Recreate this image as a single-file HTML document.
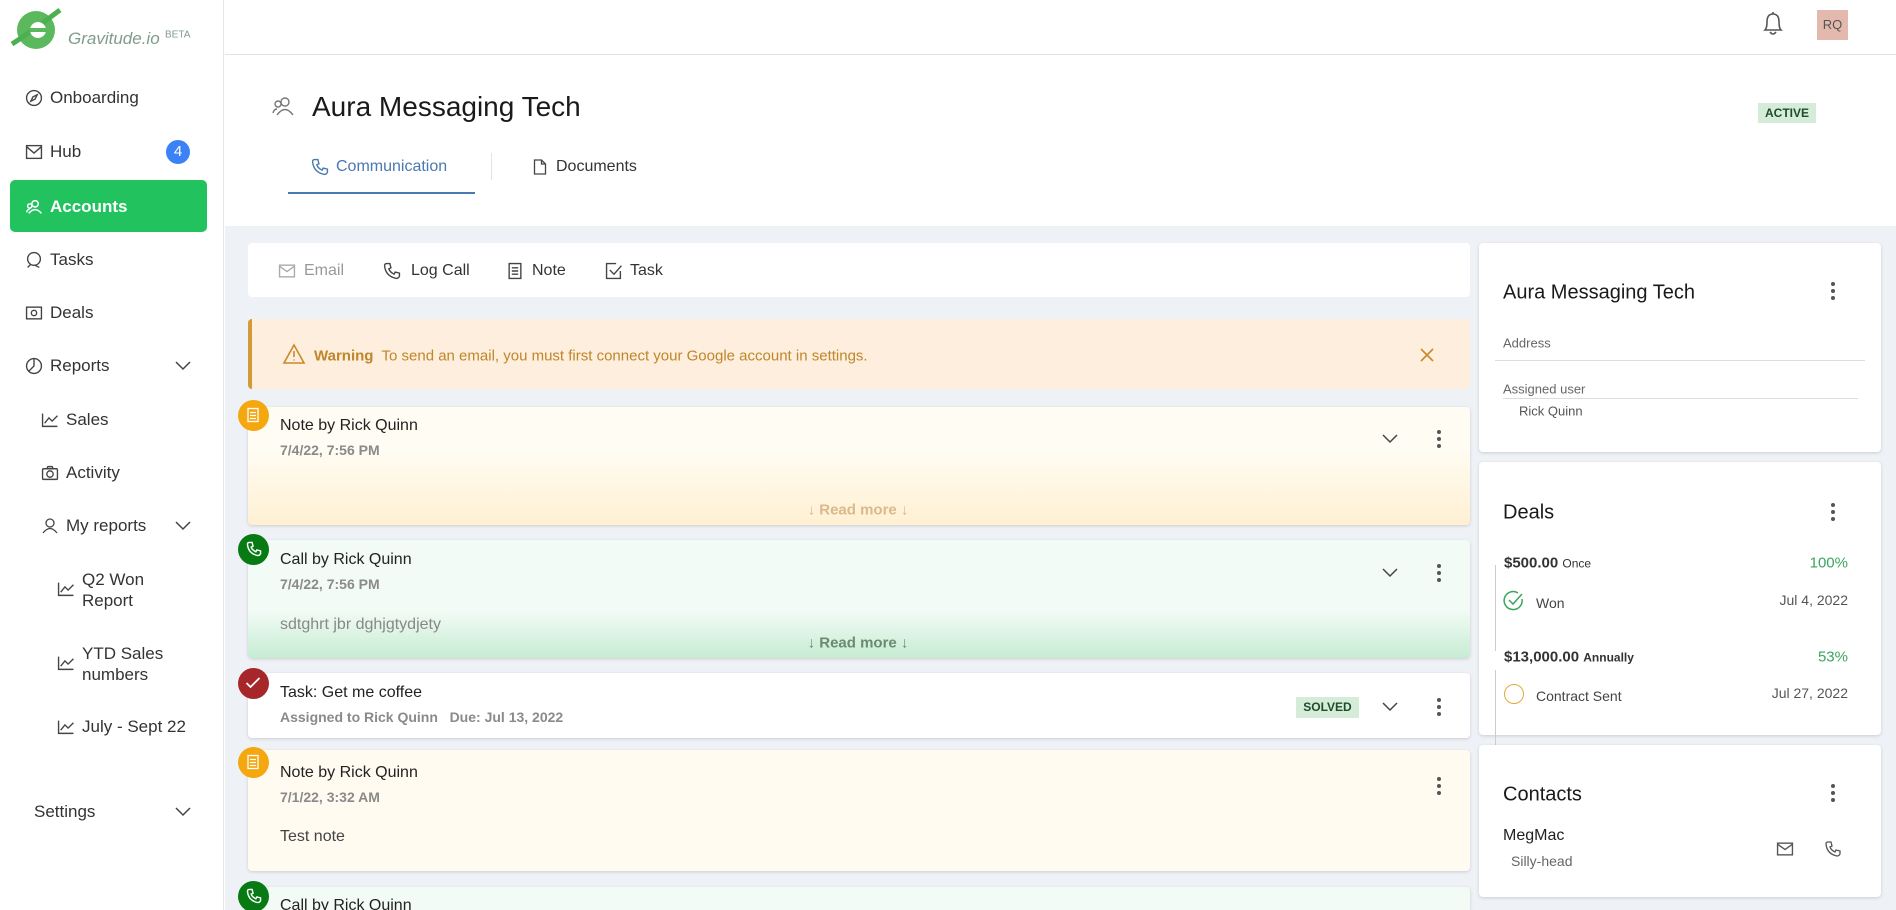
<!DOCTYPE html>
<html style="overflow:hidden;height:910px"><head><meta charset="utf-8"><style>
*{box-sizing:border-box;margin:0;padding:0}
body{width:1896px;height:910px;overflow:hidden;background:#fff;font-family:"Liberation Sans",sans-serif;color:#222;position:relative}
.a{position:absolute;white-space:nowrap}
.m{transform:translateY(-50%)}
svg{display:block}
.ic{position:absolute;transform:translate(-50%,-50%)}
.side{font-size:17px;color:#333}
.card{position:absolute;border-radius:4px;box-shadow:0 1px 3px rgba(0,0,0,.15)}
.t{font-size:16px;color:#222}
.d{font-size:14px;color:#8a8a8a;font-weight:bold}
.dots{position:absolute;width:4px;transform:translate(-50%,-50%)}
.dots i{display:block;width:4px;height:4px;border-radius:2px;background:#555;margin:3px 0}
</style></head><body>
<!-- sidebar -->
<div class="a" style="left:0;top:0;width:224px;height:910px;border-right:1px solid #e6e6e6;background:#fff"></div>
<svg class="a" style="left:8px;top:4px" width="58" height="50" viewBox="0 0 58 50"><ellipse cx="28" cy="26" rx="19" ry="19" fill="#5cb85c"/><path d="M4 40 Q20 30 52 6" stroke="#4caf50" stroke-width="5" fill="none"/><circle cx="30" cy="26" r="8" fill="#fff"/><path d="M22 26 h16" stroke="#5cb85c" stroke-width="4"/></svg>
<div class="a m" style="left:68px;top:39px;font-size:17px;font-style:italic;color:#7f9c8c">Gravitude.io</div>
<div class="a m" style="left:165px;top:35px;font-size:10px;color:#7f9c8c">BETA</div>

<div class="a" style="left:10px;top:180px;width:197px;height:52px;background:#22c35e;border-radius:5px"></div>
<svg class="ic" style="left:34px;top:98px" width="17" height="17" viewBox="0 0 16 16" fill="none" stroke="#444" stroke-width="1.3"><circle cx="8" cy="8" r="7"/><path d="M11 5 L9 9 L5 11 L7 7 Z"/></svg>
<div class="a m side" style="left:50px;top:98px">Onboarding</div>
<svg class="ic" style="left:34px;top:152px" width="17" height="15" viewBox="0 0 16 14" fill="none" stroke="#444" stroke-width="1.3"><rect x="1" y="1" width="14" height="12"/><path d="M1 2 L8 8 L15 2"/></svg>
<div class="a m side" style="left:50px;top:152px">Hub</div>
<div class="a" style="left:166px;top:140px;width:24px;height:24px;border-radius:12px;background:#3b82f6;color:#fff;font-size:15px;text-align:center;line-height:24px">4</div>
<svg class="ic" style="left:34px;top:207px" width="17" height="15" viewBox="0 0 16 14" fill="none" stroke="#fff" stroke-width="1.4"><circle cx="9" cy="4" r="3"/><path d="M3 13 Q9 6 15 13"/><circle cx="4" cy="6" r="2"/><path d="M1 12 Q2 9 4 9"/></svg>
<div class="a m side" style="left:50px;top:207px;color:#fff;font-weight:bold">Accounts</div>
<svg class="ic" style="left:34px;top:260px" width="17" height="17" viewBox="0 0 16 16" fill="none" stroke="#444" stroke-width="1.3"><circle cx="8" cy="7" r="6"/><path d="M2 15 L5 12 M9 13 L13 15"/></svg>
<div class="a m side" style="left:50px;top:260px">Tasks</div>
<svg class="ic" style="left:34px;top:313px" width="17" height="14" viewBox="0 0 16 13" fill="none" stroke="#444" stroke-width="1.3"><rect x="1" y="1" width="14" height="11"/><circle cx="8" cy="6.5" r="2.5"/></svg>
<div class="a m side" style="left:50px;top:313px">Deals</div>
<svg class="ic" style="left:34px;top:366px" width="17" height="17" viewBox="0 0 16 16" fill="none" stroke="#444" stroke-width="1.3"><circle cx="8" cy="8" r="7"/><path d="M8 1 V8 L3 13"/></svg>
<div class="a m side" style="left:50px;top:366px">Reports</div>
<svg class="ic" style="left:183px;top:366px" width="16" height="10" viewBox="0 0 16 10" fill="none" stroke="#444" stroke-width="1.5"><path d="M1 1 L8 8 L15 1"/></svg>
<svg class="ic" style="left:50px;top:420px" width="17" height="15" viewBox="0 0 16 14" fill="none" stroke="#444" stroke-width="1.3"><path d="M1 1 V13 H15 M3 10 L7 5 L10 8 L15 3"/></svg>
<div class="a m side" style="left:66px;top:420px">Sales</div>
<svg class="ic" style="left:50px;top:473px" width="17" height="15" viewBox="0 0 16 14" fill="none" stroke="#444" stroke-width="1.3"><rect x="1" y="3" width="14" height="10" rx="1"/><circle cx="8" cy="8" r="3"/><path d="M5 3 L6 1 H10 L11 3"/></svg>
<div class="a m side" style="left:66px;top:473px">Activity</div>
<svg class="ic" style="left:50px;top:526px" width="16" height="16" viewBox="0 0 16 16" fill="none" stroke="#444" stroke-width="1.3"><circle cx="8" cy="5" r="4"/><path d="M1 15 Q8 6 15 15"/></svg>
<div class="a m side" style="left:66px;top:526px">My reports</div>
<svg class="ic" style="left:183px;top:526px" width="16" height="10" viewBox="0 0 16 10" fill="none" stroke="#444" stroke-width="1.5"><path d="M1 1 L8 8 L15 1"/></svg>
<svg class="ic" style="left:66px;top:589px" width="17" height="15" viewBox="0 0 16 14" fill="none" stroke="#444" stroke-width="1.3"><path d="M1 1 V13 H15 M3 10 L7 5 L10 8 L15 3"/></svg>
<div class="a side" style="left:82px;top:569px;line-height:21px">Q2 Won<br>Report</div>
<svg class="ic" style="left:66px;top:663px" width="17" height="15" viewBox="0 0 16 14" fill="none" stroke="#444" stroke-width="1.3"><path d="M1 1 V13 H15 M3 10 L7 5 L10 8 L15 3"/></svg>
<div class="a side" style="left:82px;top:643px;line-height:21px">YTD Sales<br>numbers</div>
<svg class="ic" style="left:66px;top:727px" width="17" height="15" viewBox="0 0 16 14" fill="none" stroke="#444" stroke-width="1.3"><path d="M1 1 V13 H15 M3 10 L7 5 L10 8 L15 3"/></svg>
<div class="a m side" style="left:82px;top:727px">July - Sept 22</div>
<div class="a m side" style="left:34px;top:812px">Settings</div>
<svg class="ic" style="left:183px;top:812px" width="16" height="10" viewBox="0 0 16 10" fill="none" stroke="#444" stroke-width="1.5"><path d="M1 1 L8 8 L15 1"/></svg>

<!-- topbar -->
<div class="a" style="left:225px;top:54px;width:1671px;height:1px;background:#e3e3e3"></div>
<svg class="ic" style="left:1773px;top:24px" width="24" height="26" viewBox="0 0 24 26" fill="none" stroke="#555" stroke-width="1.6"><path d="M4 19 Q6 17 6 11 Q6 3 12 3 Q18 3 18 11 Q18 17 20 19 Z M9 21 Q12 25 15 21"/><path d="M12 1 V3"/></svg>
<div class="a" style="left:1817px;top:10px;width:31px;height:30px;background:#e3b9ad;color:#555;font-size:13px;text-align:center;line-height:30px">RQ</div>

<!-- header -->
<svg class="ic" style="left:284px;top:106px" width="24" height="20" viewBox="0 0 24 20" fill="none" stroke="#777" stroke-width="1.4"><circle cx="13" cy="6" r="4"/><path d="M5 19 Q13 8 21 19"/><circle cx="6" cy="8" r="3"/><path d="M1 17 Q2 13 5 13"/></svg>
<div class="a m" style="left:312px;top:107px;font-size:28px;color:#1a1a1a">Aura Messaging Tech</div>
<div class="a" style="left:1758px;top:103px;width:58px;height:20px;background:#d4ecd8;color:#1f4d2a;font-size:12px;font-weight:bold;text-align:center;line-height:20px">ACTIVE</div>
<svg class="ic" style="left:320px;top:167px" width="17" height="17" viewBox="0 0 16 16" fill="none" stroke="#4a78b0" stroke-width="1.3"><path d="M3 1 L6 1 L7 5 L5 6 Q6 9 10 11 L11 9 L15 10 L15 13 Q14 15 12 15 Q2 13 1 3 Q1 1 3 1Z"/></svg>
<div class="a m" style="left:336px;top:167px;font-size:16px;color:#4a78b0">Communication</div>
<div class="a" style="left:288px;top:192px;width:187px;height:2px;background:#4a78b0"></div>
<div class="a" style="left:491px;top:153px;width:1px;height:27px;background:#e3e3e3"></div>
<svg class="ic" style="left:540px;top:167px" width="13" height="16" viewBox="0 0 13 16" fill="none" stroke="#444" stroke-width="1.3"><path d="M1 1 H8 L12 5 V15 H1 Z M8 1 V5 H12"/></svg>
<div class="a m" style="left:556px;top:167px;font-size:16px;color:#333">Documents</div>

<!-- grey area -->
<div class="a" style="left:225px;top:226px;width:1671px;height:684px;background:#eef1f5"></div>
<div class="card" style="left:248px;top:243px;width:1222px;height:54px;background:#fff;box-shadow:none"></div>
<svg class="ic" style="left:287px;top:271px" width="17" height="14" viewBox="0 0 16 13" fill="none" stroke="#aaa" stroke-width="1.3"><rect x="1" y="1" width="14" height="11"/><path d="M1 2 L8 7 L15 2"/></svg>
<div class="a m" style="left:304px;top:271px;font-size:16px;color:#999">Email</div>
<svg class="ic" style="left:392px;top:271px" width="17" height="17" viewBox="0 0 16 16" fill="none" stroke="#444" stroke-width="1.3"><path d="M3 1 L6 1 L7 5 L5 6 Q6 9 10 11 L11 9 L15 10 L15 13 Q14 15 12 15 Q2 13 1 3 Q1 1 3 1Z"/></svg>
<div class="a m" style="left:411px;top:271px;font-size:16px;color:#333">Log Call</div>
<svg class="ic" style="left:515px;top:271px" width="14" height="17" viewBox="0 0 13 16" fill="none" stroke="#444" stroke-width="1.3"><rect x="1" y="1" width="11" height="14"/><path d="M3.5 5 H9.5 M3.5 8 H9.5 M3.5 11 H9.5"/></svg>
<div class="a m" style="left:532px;top:271px;font-size:16px;color:#333">Note</div>
<svg class="ic" style="left:614px;top:271px" width="17" height="17" viewBox="0 0 16 16" fill="none" stroke="#444" stroke-width="1.3"><path d="M14 8 V15 H1 V1 H10"/><path d="M4 7 L8 11 L15 3"/></svg>
<div class="a m" style="left:630px;top:271px;font-size:16px;color:#333">Task</div>

<!-- warning -->
<div class="card" style="left:248px;top:319px;width:1222px;height:70px;background:#fdeedd;border-left:4px solid #d39a3a;box-shadow:none"></div>
<svg class="ic" style="left:294px;top:354px" width="24" height="22" viewBox="0 0 24 22" fill="none" stroke="#c98a2a" stroke-width="1.6"><path d="M12 2 L22 20 H2 Z M12 8 V14 M12 16.5 V17.5"/></svg>
<div class="a m" style="left:314px;top:356px;font-size:15px;color:#c0862a"><b>Warning</b>&nbsp; To send an email, you must first connect your Google account in settings.</div>
<svg class="ic" style="left:1427px;top:355px" width="14" height="14" viewBox="0 0 14 14" stroke="#c98a2a" stroke-width="1.6"><path d="M1 1 L13 13 M13 1 L1 13"/></svg>

<!-- note 1 -->
<div class="card" style="left:248px;top:407px;width:1222px;height:118px;background:linear-gradient(#fffcf3 0%,#fffcf3 35%,#fff0d2 100%)"></div>
<div class="a m t" style="left:280px;top:426px">Note by Rick Quinn</div>
<div class="a m d" style="left:280px;top:450px">7/4/22, 7:56 PM</div>
<div class="a m" style="left:858px;top:510px;transform:translate(-50%,-50%);font-size:15px;color:#dcb88a;font-weight:bold">↓ Read more ↓</div>
<!-- call 1 -->
<div class="card" style="left:248px;top:540px;width:1222px;height:118px;background:linear-gradient(#f2fbf5 0%,#f2fbf5 60%,#c6ecd2 100%)"></div>
<div class="a m t" style="left:280px;top:560px">Call by Rick Quinn</div>
<div class="a m d" style="left:280px;top:584px">7/4/22, 7:56 PM</div>
<div class="a m" style="left:280px;top:625px;font-size:16px;color:#888">sdtghrt jbr dghjgtydjety</div>
<div class="a m" style="left:858px;top:643px;transform:translate(-50%,-50%);font-size:15px;color:#6a8a74;font-weight:bold">↓ Read more ↓</div>
<!-- task -->
<div class="card" style="left:248px;top:673px;width:1222px;height:65px;background:#fff"></div>
<div class="a m t" style="left:280px;top:693px">Task: Get me coffee</div>
<div class="a m d" style="left:280px;top:717px">Assigned to Rick Quinn &nbsp; Due: Jul 13, 2022</div>
<div class="a" style="left:1296px;top:697px;width:63px;height:21px;background:#d4ecd8;color:#1f4d2a;font-size:12px;font-weight:bold;text-align:center;line-height:21px">SOLVED</div>
<!-- note 2 -->
<div class="card" style="left:248px;top:750px;width:1222px;height:121px;background:#fffbf1"></div>
<div class="a m t" style="left:280px;top:773px">Note by Rick Quinn</div>
<div class="a m d" style="left:280px;top:797px">7/1/22, 3:32 AM</div>
<div class="a m" style="left:280px;top:837px;font-size:16px;color:#444">Test note</div>
<!-- call 2 -->
<div class="card" style="left:248px;top:887px;width:1222px;height:23px;background:#f2fbf5;border-radius:4px 4px 0 0"></div>
<div class="a m t" style="left:280px;top:906px">Call by Rick Quinn</div>

<!-- chevrons & dots -->
<svg class="ic" style="left:1390px;top:439px" width="16" height="10" viewBox="0 0 16 10" fill="none" stroke="#444" stroke-width="1.5"><path d="M1 1 L8 8 L15 1"/></svg>
<svg class="ic" style="left:1390px;top:573px" width="16" height="10" viewBox="0 0 16 10" fill="none" stroke="#444" stroke-width="1.5"><path d="M1 1 L8 8 L15 1"/></svg>
<svg class="ic" style="left:1390px;top:707px" width="16" height="10" viewBox="0 0 16 10" fill="none" stroke="#444" stroke-width="1.5"><path d="M1 1 L8 8 L15 1"/></svg>
<div class="dots" style="left:1439px;top:439px"><i></i><i></i><i></i></div>
<div class="dots" style="left:1439px;top:573px"><i></i><i></i><i></i></div>
<div class="dots" style="left:1439px;top:707px"><i></i><i></i><i></i></div>
<div class="dots" style="left:1439px;top:786px"><i></i><i></i><i></i></div>

<!-- timeline circles -->
<div class="a" style="left:238px;top:400px;width:31px;height:31px;border-radius:50%;background:#f5a70f"></div>
<svg class="ic" style="left:253px;top:415px" width="12" height="15" viewBox="0 0 12 15" fill="none" stroke="#fff" stroke-width="1.3"><rect x="1" y="1" width="10" height="13"/><path d="M3 5 H9 M3 8 H9 M3 11 H9"/></svg>
<div class="a" style="left:238px;top:534px;width:31px;height:31px;border-radius:50%;background:#087a14"></div>
<svg class="ic" style="left:254px;top:549px" width="15" height="15" viewBox="0 0 16 16" fill="none" stroke="#fff" stroke-width="1.5"><path d="M3 1 L6 1 L7 5 L5 6 Q6 9 10 11 L11 9 L15 10 L15 13 Q14 15 12 15 Q2 13 1 3 Q1 1 3 1Z"/></svg>
<div class="a" style="left:238px;top:668px;width:31px;height:31px;border-radius:50%;background:#a6262a"></div>
<svg class="ic" style="left:253px;top:683px" width="15" height="12" viewBox="0 0 15 12" fill="none" stroke="#fff" stroke-width="1.8"><path d="M1 6 L5 10 L14 1"/></svg>
<div class="a" style="left:238px;top:747px;width:31px;height:31px;border-radius:50%;background:#f5a70f"></div>
<svg class="ic" style="left:253px;top:762px" width="12" height="15" viewBox="0 0 12 15" fill="none" stroke="#fff" stroke-width="1.3"><rect x="1" y="1" width="10" height="13"/><path d="M3 5 H9 M3 8 H9 M3 11 H9"/></svg>
<div class="a" style="left:238px;top:881px;width:31px;height:31px;border-radius:50%;background:#087a14"></div>
<svg class="ic" style="left:254px;top:896px" width="15" height="15" viewBox="0 0 16 16" fill="none" stroke="#fff" stroke-width="1.5"><path d="M3 1 L6 1 L7 5 L5 6 Q6 9 10 11 L11 9 L15 10 L15 13 Q14 15 12 15 Q2 13 1 3 Q1 1 3 1Z"/></svg>

<!-- right panel -->
<div class="card" style="left:1479px;top:243px;width:402px;height:209px;background:#fff"></div>
<div class="a m" style="left:1503px;top:293px;font-size:20px;color:#1a1a1a">Aura Messaging Tech</div>
<div class="dots" style="left:1833px;top:291px"><i></i><i></i><i></i></div>
<div class="a m" style="left:1503px;top:343px;font-size:13px;color:#666">Address</div>
<div class="a" style="left:1495px;top:360px;width:370px;height:1px;background:#ddd"></div>
<div class="a m" style="left:1503px;top:389px;font-size:13px;color:#666">Assigned user</div>
<div class="a" style="left:1503px;top:398px;width:355px;height:1px;background:#ddd"></div>
<div class="a m" style="left:1519px;top:411px;font-size:13px;color:#555">Rick Quinn</div>

<div class="card" style="left:1479px;top:462px;width:402px;height:273px;background:#fff"></div>
<div class="a m" style="left:1503px;top:513px;font-size:20px;color:#1a1a1a">Deals</div>
<div class="dots" style="left:1833px;top:512px"><i></i><i></i><i></i></div>
<div class="a" style="left:1495px;top:565px;width:1px;height:86px;background:#ccc"></div>
<div class="a m" style="left:1504px;top:563px;font-size:15px;color:#333"><b>$500.00</b> <span style="font-size:12px">Once</span></div>
<div class="a m" style="right:48px;top:563px;font-size:15px;color:#3aa55c">100%</div>
<svg class="ic" style="left:1514px;top:601px" width="22" height="22" viewBox="0 0 22 22" fill="none" stroke="#3aa55c" stroke-width="1.5"><path d="M19 9 A9 9 0 1 1 15 3"/><path d="M6 10 L10 14 L19 4"/></svg>
<div class="a m" style="left:1536px;top:603px;font-size:14px;color:#444">Won</div>
<div class="a m" style="right:48px;top:600px;font-size:14px;color:#555">Jul 4, 2022</div>
<div class="a" style="left:1495px;top:670px;width:1px;height:87px;background:#ccc"></div>
<div class="a m" style="left:1504px;top:657px;font-size:15px;color:#333"><b>$13,000.00</b> <span style="font-size:12px;font-weight:bold">Annually</span></div>
<div class="a m" style="right:48px;top:657px;font-size:15px;color:#3aa55c">53%</div>
<div class="a" style="left:1504px;top:684px;width:20px;height:20px;border-radius:50%;border:1.5px solid #e0aa3a"></div>
<div class="a m" style="left:1536px;top:696px;font-size:14px;color:#444">Contract Sent</div>
<div class="a m" style="right:48px;top:693px;font-size:14px;color:#555">Jul 27, 2022</div>

<div class="card" style="left:1479px;top:745px;width:402px;height:152px;background:#fff"></div>
<div class="a m" style="left:1503px;top:795px;font-size:20px;color:#1a1a1a">Contacts</div>
<div class="dots" style="left:1833px;top:793px"><i></i><i></i><i></i></div>
<div class="a m" style="left:1503px;top:836px;font-size:16px;color:#222">MegMac</div>
<div class="a m" style="left:1511px;top:861px;font-size:14px;color:#666">Silly-head</div>
<svg class="ic" style="left:1785px;top:849px" width="17" height="14" viewBox="0 0 16 13" fill="none" stroke="#555" stroke-width="1.3"><rect x="1" y="1" width="14" height="11"/><path d="M1 2 L8 7 L15 2"/></svg>
<svg class="ic" style="left:1833px;top:849px" width="16" height="16" viewBox="0 0 16 16" fill="none" stroke="#555" stroke-width="1.3"><path d="M3 1 L6 1 L7 5 L5 6 Q6 9 10 11 L11 9 L15 10 L15 13 Q14 15 12 15 Q2 13 1 3 Q1 1 3 1Z"/></svg>
</body></html>
